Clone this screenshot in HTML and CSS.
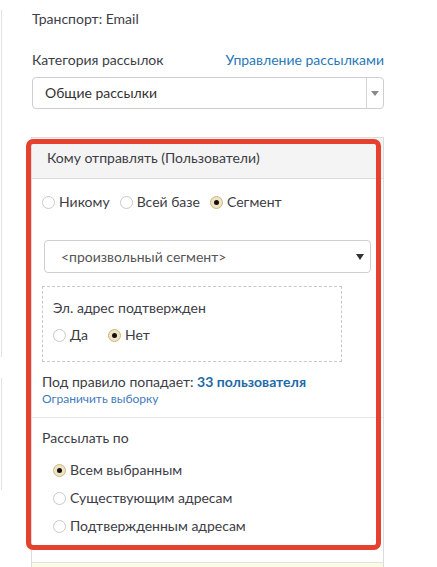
FILE: index.html
```html
<!DOCTYPE html>
<html lang="ru">
<head>
<meta charset="utf-8">
<link rel="stylesheet" href="styles.css">
</head>
<body>
<div class="page">
  <div class="rail">
    <div class="rail-seg rail-seg-1"></div>
    <div class="rail-seg rail-seg-2"></div>
  </div>
  <div class="main">
    <div class="transport">Транспорт: Email</div>
    <div class="cat-row">
      <span class="cat-label">Категория рассылок</span>
      <a class="link" href="#">Управление рассылками</a>
    </div>
    <div class="select select-cat">
      <span class="select-text">Общие рассылки</span>
      <span class="select-btn"><span class="tri tri-gray"></span></span>
    </div>

    <div class="panel">
      <div class="panel-head">Кому отправлять (Пользователи)</div>
      <div class="panel-sec sec-1">
        <div class="radio-row">
          <label class="radio"><span class="dot"></span><span>Никому</span></label>
          <label class="radio"><span class="dot"></span><span>Всей базе</span></label>
          <label class="radio"><span class="dot on"></span><span>Сегмент</span></label>
        </div>
        <div class="select select-seg">
          <span class="select-text">&lt;произвольный сегмент&gt;</span>
          <span class="tri tri-dark"></span>
        </div>
        <div class="dashed">
          <div class="dashed-label">Эл. адрес подтвержден</div>
          <div class="radio-row yn">
            <label class="radio"><span class="dot"></span><span>Да</span></label>
            <label class="radio"><span class="dot on"></span><span>Нет</span></label>
          </div>
        </div>
        <div class="count">Под правило попадает: <b class="count-num">33 пользователя</b></div>
        <a class="limit" href="#">Ограничить выборку</a>
      </div>
      <div class="panel-sec sec-2">
        <div class="send-label">Рассылать по</div>
        <div class="send-list">
          <label class="radio"><span class="dot on"></span><span>Всем выбранным</span></label>
          <label class="radio"><span class="dot"></span><span>Существующим адресам</span></label>
          <label class="radio"><span class="dot"></span><span>Подтвержденным адресам</span></label>
        </div>
      </div>
      <div class="panel-foot"></div>
      <div class="highlight"></div>
    </div>
  </div>
</div>
</body>
</html>
```

FILE: styles.css
```css
* { box-sizing: border-box; }
html, body { margin: 0; padding: 0; background: #fff; }
body {
  font-family: Lato, "Open Sans", sans-serif;
  font-size: 14px;
  line-height: 20px;
  color: #3d3d45;
}
.page { display: flex; width: 437px; height: 567px; overflow: hidden; }
.rail { width: 32px; flex: none; padding-left: 1px; }
.rail-seg { width: 1px; background: #e2e2e2; }
.rail-seg-1 { margin-top: 10px; height: 347px; }
.rail-seg-2 { margin-top: 21px; height: 112px; }
.main { width: 352px; flex: none; padding-top: 9px; }

.transport { height: 20px; }
.cat-row { margin-top: 21px; display: flex; justify-content: space-between; height: 20px; }
.link { color: #2a78b8; text-decoration: none; }

.select {
  display: flex; align-items: center; border: 1px solid #cfcfcf; border-radius: 4px; background: #fff;
}
.select-cat { margin-top: 7px; height: 32px; width: 352px; }
.select-cat .select-text { flex: 1; padding-left: 12px; font-size: 14px; color: #333; }
.select-btn {
  width: 17px; height: 100%; border-left: 1px solid #d6d6d6; display: flex; align-items: center; justify-content: center;
}
.tri { width: 0; height: 0; border-left: 4px solid transparent; border-right: 4px solid transparent; }
.tri-gray { border-top: 5px solid #8a8a8a; margin-right: 1px; }
.tri-dark { border-top: 6px solid #333; margin-right: 6px; }

.panel { position: relative; margin-top: 28px; margin-left: -1px; width: 353px; border: 1px solid #dcdcdc; border-bottom: none; }
.panel-head { height: 41px; background: #f4f4f4; border-bottom: 1px solid #dcdcdc; padding-left: 15px; padding-top: 10px; }
.panel-sec { padding-left: 10px; }
.sec-1 { padding-top: 13px; padding-bottom: 11px; border-bottom: 1px solid #e6e6e6; }
.radio-row { display: flex; gap: 10px; height: 20px; align-items: center; }
.radio { display: flex; align-items: center; gap: 4px; }
.dot {
  width: 13px; height: 13px; border-radius: 50%; border: 1px solid #c9c9c9; background: #fff; flex: none;
  display: flex; align-items: center; justify-content: center;
}
.dot.on { background: #f1e3c2; border-color: #c9b688; }
.dot.on::after { content: ""; width: 5px; height: 5px; border-radius: 50%; background: #111; }

.select-seg { margin-top: 28px; margin-left: 2px; width: 327px; height: 33px; justify-content: space-between; }
.select-seg .select-text { padding-left: 16px; color: #555; }

.dashed { margin-top: 13px; width: 300px; height: 76px; border: 1px dashed #c8c8c8; padding: 11px 0 0 10px; }
.dashed-label { height: 20px; }
.yn { margin-top: 7px; gap: 20px; }

.count { margin-top: 10px; height: 20px; }
.count-num { color: #1d6aa8; font-weight: 700; }
.limit { display: block; font-size: 12px; line-height: 14px; color: #3f7bbd; text-decoration: none; }

.sec-2 { padding-top: 10px; padding-bottom: 26px; }
.send-label { height: 20px; }
.send-list { margin-top: 12px; padding-left: 11px; display: flex; flex-direction: column; gap: 8px; }
.send-list .radio { height: 20px; }

.panel-foot { height: 20px; border-top: 1px solid #e2e2e2; background: #fcfbe6; }

.highlight {
  position: absolute; left: -6px; top: 1px; right: 2px; height: 411px;
  border: 5px solid #e6402f; border-radius: 7px; pointer-events: none;
}
```
